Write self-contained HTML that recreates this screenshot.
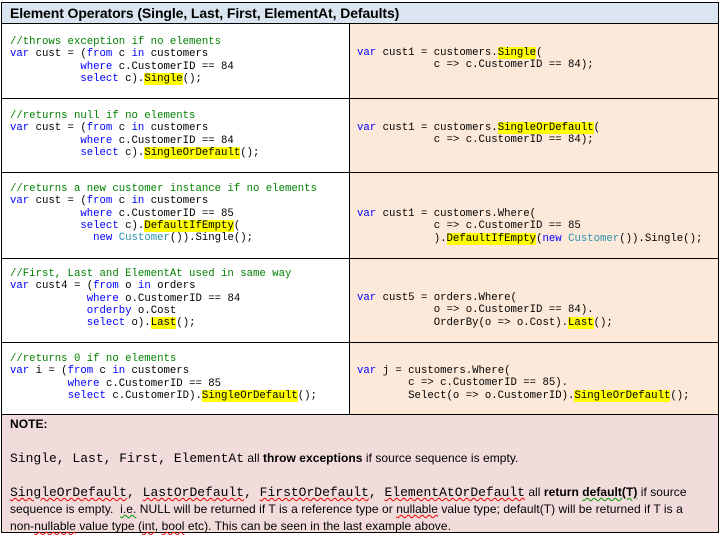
<!DOCTYPE html>
<html><head><meta charset="utf-8"><style>
*{margin:0;padding:0;box-sizing:border-box}
body{width:720px;height:534px;background:#fff;position:relative;overflow:hidden;font-family:"Liberation Sans",sans-serif}
.box{position:absolute;border:1px solid #000}
pre{position:absolute;font-family:"Liberation Mono","Courier New",monospace;font-size:10.67px;line-height:12.3px;color:#000;white-space:pre}
.c{color:#008000}.k{color:#0000ff}.t{color:#2b91af}.h{background:#ffff00}
.note{position:absolute;font-size:12px;letter-spacing:0.05px;color:#000;font-family:"Liberation Sans",sans-serif}
.m{font-family:"Liberation Mono",monospace;font-size:13px;letter-spacing:0}
.u{text-decoration:underline wavy #e00;text-decoration-thickness:1px}
.ug{text-decoration:underline wavy #090;text-decoration-thickness:1px}
</style></head><body>
<div class="box" style="left:1px;top:2px;width:718px;height:531px;"></div>
<div class="box" style="left:1px;top:2px;width:718px;height:22px;background:#dbe5f1;"></div>
<div style="position:absolute;left:10px;top:5px;font-size:14px;font-weight:bold;letter-spacing:-0.1px">Element Operators (Single, Last, First, ElementAt, Defaults)</div>
<div class="box" style="left:349px;top:23px;width:370px;height:392px;background:#fde9d9;"></div>
<div class="box" style="left:1px;top:23px;width:718px;height:76px;"></div>
<div class="box" style="left:1px;top:98px;width:718px;height:75px"></div>
<div class="box" style="left:1px;top:172px;width:718px;height:87px"></div>
<div class="box" style="left:1px;top:258px;width:718px;height:85px"></div>
<div class="box" style="left:1px;top:342px;width:718px;height:73px"></div>
<div class="box" style="left:1px;top:414px;width:718px;height:119px;background:#f2dcdb"></div>
<div style="position:absolute;left:349px;top:23px;width:1px;height:392px;background:#000"></div>

<pre style="left:10px;top:36px"><span class="c">//throws exception if no elements</span>
<span class="k">var</span> cust = (<span class="k">from</span> c <span class="k">in</span> customers
           <span class="k">where</span> c.CustomerID == 84
           <span class="k">select</span> c).<span class="h">Single</span>();</pre>
<pre style="left:357px;top:47px"><span class="k">var</span> cust1 = customers.<span class="h">Single</span>(
            c =&gt; c.CustomerID == 84);</pre>

<pre style="left:10px;top:110px"><span class="c">//returns null if no elements</span>
<span class="k">var</span> cust = (<span class="k">from</span> c <span class="k">in</span> customers
           <span class="k">where</span> c.CustomerID == 84
           <span class="k">select</span> c).<span class="h">SingleOrDefault</span>();</pre>
<pre style="left:357px;top:122px"><span class="k">var</span> cust1 = customers.<span class="h">SingleOrDefault</span>(
            c =&gt; c.CustomerID == 84);</pre>

<pre style="left:10px;top:183px"><span class="c">//returns a new customer instance if no elements</span>
<span class="k">var</span> cust = (<span class="k">from</span> c <span class="k">in</span> customers
           <span class="k">where</span> c.CustomerID == 85
           <span class="k">select</span> c).<span class="h">DefaultIfEmpty</span>(
             <span class="k">new</span> <span class="t">Customer</span>()).Single();</pre>
<pre style="left:357px;top:208px"><span class="k">var</span> cust1 = customers.Where(
            c =&gt; c.CustomerID == 85
            ).<span class="h">DefaultIfEmpty</span>(<span class="k">new</span> <span class="t">Customer</span>()).Single();</pre>

<pre style="left:10px;top:268px"><span class="c">//First, Last and ElementAt used in same way</span>
<span class="k">var</span> cust4 = (<span class="k">from</span> o <span class="k">in</span> orders
            <span class="k">where</span> o.CustomerID == 84
            <span class="k">orderby</span> o.Cost
            <span class="k">select</span> o).<span class="h">Last</span>();</pre>
<pre style="left:357px;top:292px"><span class="k">var</span> cust5 = orders.Where(
            o =&gt; o.CustomerID == 84).
            OrderBy(o =&gt; o.Cost).<span class="h">Last</span>();</pre>

<pre style="left:10px;top:353px"><span class="c">//returns 0 if no elements</span>
<span class="k">var</span> i = (<span class="k">from</span> c <span class="k">in</span> customers
         <span class="k">where</span> c.CustomerID == 85
         <span class="k">select</span> c.CustomerID).<span class="h">SingleOrDefault</span>();</pre>
<pre style="left:357px;top:365px"><span class="k">var</span> j = customers.Where(
        c =&gt; c.CustomerID == 85).
        Select(o =&gt; o.CustomerID).<span class="h">SingleOrDefault</span>();</pre>

<div class="note" style="left:10px;top:417px;font-weight:bold">NOTE:</div>
<div class="note" style="left:10px;top:451px"><span class="m">Single, Last, First, ElementAt</span> all <b>throw exceptions</b> if source sequence is empty.</div>
<div class="note" style="left:10px;top:484px;line-height:17px;width:700px"><span class="m"><span class="u">SingleOrDefault</span>, <span class="u">LastOrDefault</span>, <span class="u">FirstOrDefault</span>, <span class="u">ElementAtOrDefault</span></span> all <b>return <span class="ug">default(T)</span></b> if source sequence is empty.&nbsp; <span class="ug">i.e.</span> NULL will be returned if T is a reference type or <span class="u">nullable</span> value type; default(T) will be returned if T is a non-<span class="u">nullable</span> value type (<span class="u">int</span>, <span class="u">bool</span> etc). This can be seen in the last example above.</div>
</body></html>
